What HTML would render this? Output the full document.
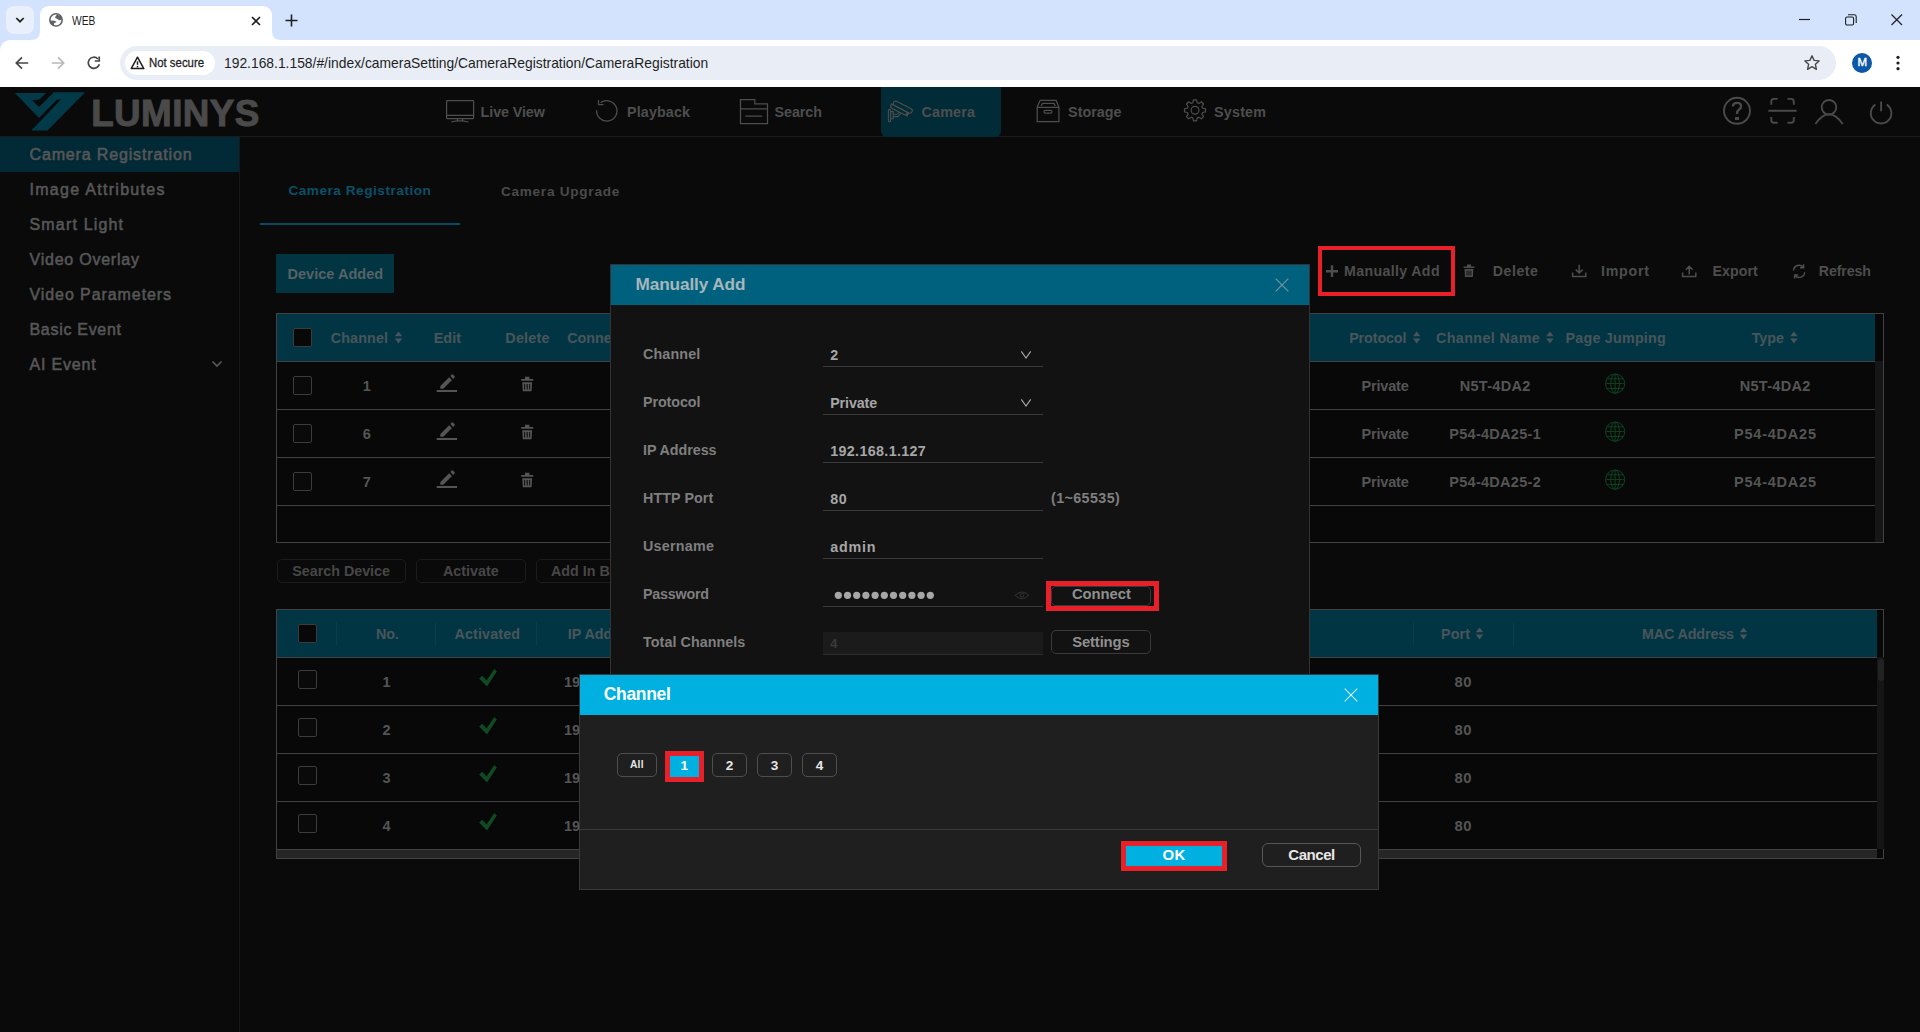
<!DOCTYPE html>
<html><head><meta charset="utf-8">
<style>
*{box-sizing:border-box;margin:0;padding:0}
html,body{width:1920px;height:1032px;overflow:hidden;background:#0a0a0a;font-family:"Liberation Sans",sans-serif}
.a{position:absolute}
.t{position:absolute;white-space:nowrap;line-height:1}
svg{position:absolute;overflow:visible}
</style></head><body>

<div class="a" style="left:0px;top:0px;width:1920px;height:40px;background:#d3e3fd"></div>
<div class="a" style="left:6px;top:6px;width:28px;height:28px;background:#e9effb;border-radius:8px"></div>
<svg style="left:0;top:0" width="40" height="40"><path d="M16.3 18 L20 21.7 L23.7 18" stroke="#1f1f1f" stroke-width="1.7" fill="none"/></svg>
<div class="a" style="left:40px;top:6px;width:232px;height:34px;background:#fff;border-radius:9px 9px 0 0"></div>
<svg style="left:31px;top:31px" width="9" height="9"><path d="M0 9 Q9 9 9 0 V9 Z" fill="#fff"/></svg>
<svg style="left:272px;top:31px" width="9" height="9"><path d="M0 0 Q0 9 9 9 H0 Z" fill="#fff"/></svg>
<svg style="left:44px;top:8px" width="24" height="24" viewBox="0 0 24 24"><circle cx="12" cy="11.9" r="6.15" fill="none" stroke="#5f6368" stroke-width="1.6"/><path d="M13 6.6 L16.6 8.2 L17.9 10.6 L17.5 11.8 L15.1 12.2 L13.5 10.9 L11.2 10.1 L11.4 8.4 Z M6.2 12.6 L10.9 12.7 L12.6 14.2 L10.2 15.1 L9.9 17.4 L7.6 16.3 L6 14 Z" fill="#5f6368"/></svg>
<div class="t" style="left:72.20px;top:15.00px;font-size:12.5px;color:#1f1f1f;transform:scaleX(0.82);transform-origin:0 0;">WEB</div>
<svg style="left:251px;top:16px" width="10" height="10"><path d="M1 1 L9 9 M9 1 L1 9" stroke="#1f1f1f" stroke-width="1.6"/></svg>
<svg style="left:285px;top:14px" width="13" height="13"><path d="M6.5 0.5 V12.5 M0.5 6.5 H12.5" stroke="#1f1f1f" stroke-width="1.6"/></svg>
<svg style="left:1799px;top:13px" width="12" height="12"><path d="M0 6.5 H11" stroke="#1f1f1f" stroke-width="1.2"/></svg>
<svg style="left:1845px;top:14px" width="12" height="12"><rect x="0.6" y="3" width="8" height="8" rx="1.5" stroke="#1f1f1f" stroke-width="1.1" fill="none"/><path d="M3 0.8 H9.3 Q11.2 0.8 11.2 2.7 V9" stroke="#1f1f1f" stroke-width="1.1" fill="none"/></svg>
<svg style="left:1891px;top:14px" width="12" height="12"><path d="M0.5 0.5 L11 11 M11 0.5 L0.5 11" stroke="#1f1f1f" stroke-width="1.2"/></svg>
<div class="a" style="left:0px;top:40px;width:12px;height:12px;background:#d3e3fd"></div>
<div class="a" style="left:0px;top:40px;width:1920px;height:47px;background:#fff;border-radius:10px 0 0 0"></div>
<svg style="left:14px;top:55px" width="16" height="16"><path d="M14.2 8 H2.5 M8 2.3 L2.3 8 L8 13.7" stroke="#474747" stroke-width="1.7" fill="none"/></svg>
<svg style="left:50px;top:55px" width="16" height="16"><path d="M1.8 8 H13.5 M8 2.3 L13.7 8 L8 13.7" stroke="#b9b9b9" stroke-width="1.7" fill="none"/></svg>
<svg style="left:86px;top:55px" width="16" height="16"><path d="M13.3 9.2 A5.6 5.6 0 1 1 11.8 3.8" stroke="#474747" stroke-width="1.7" fill="none"/><path d="M13.2 1.5 V6 H8.7" stroke="#474747" stroke-width="1.7" fill="none"/></svg>
<div class="a" style="left:120px;top:46px;width:1716px;height:34px;background:#e9eef6;border-radius:17px"></div>
<div class="a" style="left:125px;top:51px;width:90px;height:24px;background:#fff;border-radius:12px"></div>
<svg style="left:130px;top:56px" width="15" height="14"><path d="M7.5 1.2 L13.8 12.6 H1.2 Z" stroke="#1f1f1f" stroke-width="1.5" fill="none" stroke-linejoin="round"/><path d="M7.5 5.3 V8.8" stroke="#1f1f1f" stroke-width="1.5"/><circle cx="7.5" cy="10.7" r="0.85" fill="#1f1f1f"/></svg>
<div class="t" style="left:149.00px;top:57.10px;font-size:12.5px;color:#1f1f1f;-webkit-text-stroke:0.3px #1f1f1f;transform:scaleX(0.91);transform-origin:0 0;">Not secure</div>
<div class="t" style="left:224.00px;top:56.48px;font-size:14.5px;color:#1f1f1f;transform:scaleX(0.955);transform-origin:0 0;">192.168.1.158/#/index/cameraSetting/CameraRegistration/CameraRegistration</div>
<svg style="left:1803px;top:54px" width="18" height="18"><path d="M9 1.8 L11.1 6.4 L16.1 6.9 L12.4 10.3 L13.4 15.3 L9 12.7 L4.6 15.3 L5.6 10.3 L1.9 6.9 L6.9 6.4 Z" stroke="#474747" stroke-width="1.4" fill="none" stroke-linejoin="round"/></svg>
<div class="a" style="left:1852px;top:53px;width:20px;height:20px;border-radius:10px;background:#0b57a8"></div>
<div class="t" style="left:1857.51px;top:57.46px;font-size:11.5px;color:#fff;-webkit-text-stroke:0.4px #fff;">M</div>
<svg style="left:1895px;top:55px" width="6" height="16"><circle cx="3" cy="2.3" r="1.6" fill="#1f1f1f"/><circle cx="3" cy="8" r="1.6" fill="#1f1f1f"/><circle cx="3" cy="13.7" r="1.6" fill="#1f1f1f"/></svg>
<div class="a" style="left:0px;top:136px;width:1920px;height:1px;background:#1b1b1b"></div>
<svg style="left:0;top:0" width="100" height="140"><path d="M14.9 93.1 L46 93.1 L39.4 99.4 L32.2 100.2 L39 106.9 L53.9 92.2 L85.1 92.2 L47.5 130.6 L31.3 130.6 L61 99.4 L56.9 99.7 L39 118 Z" fill="#023a4a"/></svg>
<div class="t" style="left:91.20px;top:95.81px;font-size:36.8px;color:#4a4a4a;font-weight:bold;letter-spacing:0.43px;-webkit-text-stroke:1px #4a4a4a;">LUMINYS</div>
<div class="a" style="left:881px;top:87px;width:120px;height:50px;background:#022b38;border-radius:0 0 6px 6px"></div>
<svg style="left:0;top:0" width="1300" height="140" fill="none" stroke="#4e4e4e" stroke-width="1.25">
 <rect x="446.6" y="100.6" width="27" height="18" rx="0.8"/>
 <path d="M447 115.4 H473 M457.5 118.8 V120.8 M462.5 118.8 V120.8 M451 122 Q459.7 119.8 468.4 122"/>
 <path d="M596.6 110.3 A10.2 10.2 0 1 0 600.6 102.8"/>
 <path d="M598.5 100 V104.7 H603.5"/>
 <path d="M740.5 99.5 H754.8 V103.9 H767.5 V123.6 H740.5 Z M740.5 108.8 H767.5 M745.3 116.2 H762.2"/>
 <path d="M1037.2 107.3 H1058.9 V121.5 H1037.2 Z M1040 100.4 H1056.2 L1058.9 107.3 M1040 100.4 L1037.2 107.3 M1041.2 106 L1042.4 103.4 H1054 L1055.2 106"/>
 <rect x="1044" y="110.4" width="8" height="2.8" rx="1.4"/>
</svg>
<svg style="left:0;top:0" width="1300" height="140" fill="none" stroke="#4e4e4e" stroke-width="1.2" stroke-linejoin="round"><path d="M1192.82 102.71 L1193.43 99.82 L1196.57 99.82 L1197.18 102.71 L1198.83 103.39 L1201.31 101.78 L1203.52 103.99 L1201.91 106.47 L1202.59 108.12 L1205.48 108.73 L1205.48 111.87 L1202.59 112.48 L1201.91 114.13 L1203.52 116.61 L1201.31 118.82 L1198.83 117.21 L1197.18 117.89 L1196.57 120.78 L1193.43 120.78 L1192.82 117.89 L1191.17 117.21 L1188.69 118.82 L1186.48 116.61 L1188.09 114.13 L1187.41 112.48 L1184.52 111.87 L1184.52 108.73 L1187.41 108.12 L1188.09 106.47 L1186.48 103.99 L1188.69 101.78 L1191.17 103.39 Z"/><circle cx="1195" cy="110.3" r="3.9"/></svg>
<svg style="left:0;top:0" width="1000" height="140" fill="none" stroke="#4e4e4e" stroke-width="1.1">
 <rect x="888.4" y="109.4" width="2.2" height="12.2" rx="1"/>
 <path d="M890.6 111.6 H893.2 V118.8 H890.6 M893.2 114.3 H896.8 Q898.6 114 899 112 M893.2 116.6 H898 L900.8 113.4"/>
 <g transform="translate(895.2 100.6) rotate(27)">
  <rect x="-0.6" y="0" width="20.6" height="4.8" rx="2.2"/>
  <path d="M-1.8 4.8 H17.6 V8.4 H1 Q-1.8 8.4 -1.8 6.2 Z"/>
  <circle cx="16.4" cy="6.5" r="0.8"/>
 </g>
</svg>
<div class="t" style="left:480.60px;top:105.31px;font-size:14.3px;color:#4e4e4e;font-weight:bold;letter-spacing:-0.08px;">Live View</div>
<div class="t" style="left:627.00px;top:105.31px;font-size:14.3px;color:#4e4e4e;font-weight:bold;letter-spacing:0.14px;">Playback</div>
<div class="t" style="left:774.50px;top:105.31px;font-size:14.3px;color:#4e4e4e;font-weight:bold;letter-spacing:-0.04px;">Search</div>
<div class="t" style="left:921.50px;top:105.31px;font-size:14.3px;color:#4e4e4e;font-weight:bold;letter-spacing:0.21px;">Camera</div>
<div class="t" style="left:1068.10px;top:105.31px;font-size:14.3px;color:#4e4e4e;font-weight:bold;letter-spacing:0.03px;">Storage</div>
<div class="t" style="left:1214.00px;top:105.31px;font-size:14.3px;color:#4e4e4e;font-weight:bold;letter-spacing:0.23px;">System</div>
<svg style="left:0;top:0" width="1920" height="140" fill="none" stroke="#4a4a4a" stroke-width="1.9">
 <circle cx="1737" cy="110.8" r="13"/>
 <path d="M1732.9 106.6 Q1732.9 102.9 1737 102.9 Q1741.1 102.9 1741.1 106.3 Q1741.1 108.5 1738.8 109.8 Q1737 110.9 1737 114" stroke-width="2.4"/>
 <path d="M1771.3 104.8 V101.6 Q1771.3 98.9 1774 98.9 H1777.6 M1787.5 98.9 H1791 Q1793.8 98.9 1793.8 101.6 V104.8 M1793.8 117 V120 Q1793.8 122.8 1791 122.8 H1787.5 M1777.6 122.8 H1774 Q1771.3 122.8 1771.3 120 V117 M1768.4 110.8 H1796.6"/>
 <circle cx="1829" cy="107.3" r="7.3"/>
 <path d="M1815.4 124 Q1829 104.5 1842.7 124"/>
 <path d="M1875.4 104.6 A10.3 10.3 0 1 0 1886.8 104.6 M1881.1 101.4 V111.3"/>
</svg>
<div class="a" style="left:1735px;top:116.5px;width:3.6px;height:3.6px;background:#4a4a4a"></div>
<div class="a" style="left:239px;top:137px;width:1px;height:895px;background:#181818"></div>
<div class="a" style="left:0px;top:137px;width:239px;height:35px;background:#022a36"></div>
<div class="t" style="left:29.50px;top:147.14px;font-size:16px;color:#575757;letter-spacing:0.85px;-webkit-text-stroke:0.55px #575757;">Camera Registration</div>
<div class="t" style="left:29.50px;top:182.14px;font-size:16px;color:#575757;letter-spacing:1.29px;-webkit-text-stroke:0.55px #575757;">Image Attributes</div>
<div class="t" style="left:29.50px;top:217.14px;font-size:16px;color:#575757;letter-spacing:1.17px;-webkit-text-stroke:0.55px #575757;">Smart Light</div>
<div class="t" style="left:29.50px;top:252.14px;font-size:16px;color:#575757;letter-spacing:0.77px;-webkit-text-stroke:0.55px #575757;">Video Overlay</div>
<div class="t" style="left:29.50px;top:287.14px;font-size:16px;color:#575757;letter-spacing:0.92px;-webkit-text-stroke:0.55px #575757;">Video Parameters</div>
<div class="t" style="left:29.50px;top:322.14px;font-size:16px;color:#575757;letter-spacing:0.70px;-webkit-text-stroke:0.55px #575757;">Basic Event</div>
<div class="t" style="left:29.50px;top:357.14px;font-size:16px;color:#575757;letter-spacing:0.82px;-webkit-text-stroke:0.55px #575757;">AI Event</div>
<svg style="left:211px;top:360px" width="12" height="8"><path d="M1.5 1.5 L6 6 L10.5 1.5" stroke="#575757" stroke-width="1.7" fill="none"/></svg>
<div class="t" style="left:288.40px;top:183.92px;font-size:13.6px;color:#0a5068;font-weight:bold;letter-spacing:0.53px;">Camera Registration</div>
<div class="t" style="left:500.90px;top:184.82px;font-size:13.6px;color:#4a4a4a;font-weight:bold;letter-spacing:0.74px;">Camera Upgrade</div>
<div class="a" style="left:260px;top:223px;width:200px;height:2px;background:#044a60"></div>
<div class="a" style="left:276px;top:253.5px;width:117.5px;height:39px;background:#023542"></div>
<div class="t" style="left:287.50px;top:267.23px;font-size:14.5px;color:#566266;font-weight:bold;letter-spacing:0.02px;">Device Added</div>
<div class="t" style="left:1344.00px;top:263.73px;font-size:14.2px;color:#4e4e4e;font-weight:bold;letter-spacing:0.35px;">Manually Add</div>
<div class="t" style="left:1492.80px;top:263.73px;font-size:14.2px;color:#4e4e4e;font-weight:bold;letter-spacing:0.52px;">Delete</div>
<div class="t" style="left:1601.00px;top:263.73px;font-size:14.2px;color:#4e4e4e;font-weight:bold;letter-spacing:0.77px;">Import</div>
<div class="t" style="left:1712.50px;top:263.73px;font-size:14.2px;color:#4e4e4e;font-weight:bold;letter-spacing:0.07px;">Export</div>
<div class="t" style="left:1818.75px;top:263.73px;font-size:14.2px;color:#4e4e4e;font-weight:bold;letter-spacing:-0.10px;">Refresh</div>
<svg style="left:0;top:0" width="1920" height="300" fill="none" stroke="#4e4e4e" stroke-width="1.5">
 <path d="M1332 265.3 V277 M1326 271.2 H1338" stroke-width="2.4"/>
 <path d="M1463.6 266.4 H1474.3 V268 H1463.6 Z M1467 264.6 H1471 V266.4 H1467 Z M1464.6 268.9 H1473.3 L1472.9 277 H1465 Z" fill="#4e4e4e" stroke="none"/><path d="M1467.1 270.6 V275.6 M1469 270.6 V275.6 M1470.9 270.6 V275.6" stroke="#0a0a0a" stroke-width="0.9"/>
 <path d="M1579.2 264.8 V273 M1575.8 269.6 L1579.2 273 L1582.6 269.6 M1572.6 272.5 V276.6 H1585.8 V272.5"/>
 <path d="M1689.2 274.5 V266.3 M1685.8 269.7 L1689.2 266.3 L1692.6 269.7 M1682.6 272.5 V276.6 H1695.8 V272.5"/>
 <path d="M1793.5 270.5 A5.6 5.6 0 0 1 1803.3 267.2 M1804.7 272.2 A5.6 5.6 0 0 1 1794.9 275.5 M1803.6 264.2 V267.8 H1800 M1794.6 278.6 V275 H1798.2"/>
</svg>
<div class="a" style="left:1318px;top:246px;width:137px;height:50px;border:4.6px solid #e8202a"></div>
<div class="a" style="left:276px;top:313px;width:1608px;height:230px;border:1px solid #424242;background:#080808"></div>
<div class="a" style="left:277px;top:314px;width:1598px;height:47px;background:#023543"></div>
<div class="a" style="left:1875px;top:361px;width:8px;height:181px;background:#161616"></div>
<div class="a" style="left:277px;top:361px;width:1598px;height:1px;background:#424242"></div>
<div class="a" style="left:277px;top:409px;width:1598px;height:1px;background:#424242"></div>
<div class="a" style="left:277px;top:457px;width:1598px;height:1px;background:#424242"></div>
<div class="a" style="left:277px;top:505px;width:1598px;height:1px;background:#424242"></div>
<div class="a" style="left:293px;top:328px;width:19px;height:19px;border:1px solid #3c3c3c;border-radius:2px;background:#080808"></div>
<div class="a" style="left:293px;top:376px;width:19px;height:19px;border:1px solid #3c3c3c;border-radius:2px;background:#0a0a0a"></div>
<div class="a" style="left:293px;top:424px;width:19px;height:19px;border:1px solid #3c3c3c;border-radius:2px;background:#0a0a0a"></div>
<div class="a" style="left:293px;top:472px;width:19px;height:19px;border:1px solid #3c3c3c;border-radius:2px;background:#0a0a0a"></div>
<div class="t" style="left:330.80px;top:331.41px;font-size:14.3px;color:#48555a;font-weight:bold;letter-spacing:0.13px;">Channel</div>
<div class="t" style="left:433.70px;top:331.41px;font-size:14.3px;color:#48555a;font-weight:bold;letter-spacing:0.10px;">Edit</div>
<div class="t" style="left:505.30px;top:331.41px;font-size:14.3px;color:#48555a;font-weight:bold;letter-spacing:0.26px;">Delete</div>
<div class="t" style="left:567.20px;top:331.41px;font-size:14.3px;color:#48555a;font-weight:bold;">Connection</div>
<div class="t" style="left:1349.20px;top:331.41px;font-size:14.3px;color:#48555a;font-weight:bold;letter-spacing:-0.10px;">Protocol</div>
<div class="t" style="left:1436.00px;top:331.41px;font-size:14.3px;color:#48555a;font-weight:bold;letter-spacing:0.40px;">Channel Name</div>
<div class="t" style="left:1565.50px;top:331.41px;font-size:14.3px;color:#48555a;font-weight:bold;letter-spacing:0.23px;">Page Jumping</div>
<div class="t" style="left:1751.70px;top:331.41px;font-size:14.3px;color:#48555a;font-weight:bold;letter-spacing:-0.00px;">Type</div>
<svg style="left:0;top:0" width="1920" height="700" fill="#48555a"><path d="M394.8 336.3 L398.5 331.5 L402.2 336.3 Z M394.8 338.6 L398.5 343.4 L402.2 338.6 Z"/><path d="M1413 336.3 L1416.7 331.5 L1420.4 336.3 Z M1413 338.6 L1416.7 343.4 L1420.4 338.6 Z"/><path d="M1546.2 336.3 L1549.9 331.5 L1553.6000000000001 336.3 Z M1546.2 338.6 L1549.9 343.4 L1553.6000000000001 338.6 Z"/><path d="M1790.2 336.3 L1793.9 331.5 L1797.6000000000001 336.3 Z M1790.2 338.6 L1793.9 343.4 L1797.6000000000001 338.6 Z"/></svg>
<div class="t" style="left:362.77px;top:379.48px;font-size:14.5px;color:#555555;font-weight:bold;">1</div>
<div class="t" style="left:1361.55px;top:379.48px;font-size:14.5px;color:#555555;font-weight:bold;letter-spacing:-0.18px;">Private</div>
<div class="t" style="left:1459.75px;top:379.48px;font-size:14.5px;color:#555555;font-weight:bold;letter-spacing:0.29px;">N5T-4DA2</div>
<div class="t" style="left:1739.75px;top:379.48px;font-size:14.5px;color:#555555;font-weight:bold;letter-spacing:0.29px;">N5T-4DA2</div>
<div class="t" style="left:362.77px;top:427.48px;font-size:14.5px;color:#555555;font-weight:bold;">6</div>
<div class="t" style="left:1361.55px;top:427.48px;font-size:14.5px;color:#555555;font-weight:bold;letter-spacing:-0.18px;">Private</div>
<div class="t" style="left:1449.25px;top:427.48px;font-size:14.5px;color:#555555;font-weight:bold;letter-spacing:0.28px;">P54-4DA25-1</div>
<div class="t" style="left:1734.00px;top:427.48px;font-size:14.5px;color:#555555;font-weight:bold;letter-spacing:0.78px;">P54-4DA25</div>
<div class="t" style="left:362.77px;top:475.48px;font-size:14.5px;color:#555555;font-weight:bold;">7</div>
<div class="t" style="left:1361.55px;top:475.48px;font-size:14.5px;color:#555555;font-weight:bold;letter-spacing:-0.18px;">Private</div>
<div class="t" style="left:1449.25px;top:475.48px;font-size:14.5px;color:#555555;font-weight:bold;letter-spacing:0.28px;">P54-4DA25-2</div>
<div class="t" style="left:1734.00px;top:475.48px;font-size:14.5px;color:#555555;font-weight:bold;letter-spacing:0.78px;">P54-4DA25</div>
<svg style="left:0;top:0" width="1920" height="560"><path d="M436.7 389.9 H457 V391.9 H436.7 Z M440.2 388.7 L440.4 385.9 L449.1 377.2 L452 380.1 L443.3 388.8 Z M450.3 376 L451.7 374.6 Q452.3 374.1 452.9 374.6 L454.6 376.3 Q455.1 376.9 454.6 377.5 L453.2 378.9 Z" fill="#555555"/><path d="M521.2 379 H533.2 V380.8 H521.2 Z M525 376.7 H529.4 V379 H525 Z M522.3 382.2 H532.1 L531.6 391.2 H522.8 Z" fill="#555555"/><path d="M524.7 384 V389.5 M527.2 384 V389.5 M529.7 384 V389.5" stroke="#0a0a0a" stroke-width="1"/><g fill="none" stroke="#0c4423" stroke-width="1.0"><circle cx="1615.1" cy="383.6" r="9.6"/><ellipse cx="1615.1" cy="383.6" rx="4.3" ry="9.6"/><path d="M1605.5 383.6 H1624.7 M1606.8 378.8 H1623.4 M1606.8 388.40000000000003 H1623.4 M1615.1 374.0 V393.20000000000005"/></g><path d="M436.7 437.9 H457 V439.9 H436.7 Z M440.2 436.7 L440.4 433.9 L449.1 425.2 L452 428.1 L443.3 436.8 Z M450.3 424 L451.7 422.6 Q452.3 422.1 452.9 422.6 L454.6 424.3 Q455.1 424.9 454.6 425.5 L453.2 426.9 Z" fill="#555555"/><path d="M521.2 427 H533.2 V428.8 H521.2 Z M525 424.7 H529.4 V427 H525 Z M522.3 430.2 H532.1 L531.6 439.2 H522.8 Z" fill="#555555"/><path d="M524.7 432 V437.5 M527.2 432 V437.5 M529.7 432 V437.5" stroke="#0a0a0a" stroke-width="1"/><g fill="none" stroke="#0c4423" stroke-width="1.0"><circle cx="1615.1" cy="431.6" r="9.6"/><ellipse cx="1615.1" cy="431.6" rx="4.3" ry="9.6"/><path d="M1605.5 431.6 H1624.7 M1606.8 426.8 H1623.4 M1606.8 436.40000000000003 H1623.4 M1615.1 422.0 V441.20000000000005"/></g><path d="M436.7 485.9 H457 V487.9 H436.7 Z M440.2 484.7 L440.4 481.9 L449.1 473.2 L452 476.1 L443.3 484.8 Z M450.3 472 L451.7 470.6 Q452.3 470.1 452.9 470.6 L454.6 472.3 Q455.1 472.9 454.6 473.5 L453.2 474.9 Z" fill="#555555"/><path d="M521.2 475 H533.2 V476.8 H521.2 Z M525 472.7 H529.4 V475 H525 Z M522.3 478.2 H532.1 L531.6 487.2 H522.8 Z" fill="#555555"/><path d="M524.7 480 V485.5 M527.2 480 V485.5 M529.7 480 V485.5" stroke="#0a0a0a" stroke-width="1"/><g fill="none" stroke="#0c4423" stroke-width="1.0"><circle cx="1615.1" cy="479.6" r="9.6"/><ellipse cx="1615.1" cy="479.6" rx="4.3" ry="9.6"/><path d="M1605.5 479.6 H1624.7 M1606.8 474.8 H1623.4 M1606.8 484.40000000000003 H1623.4 M1615.1 470.0 V489.20000000000005"/></g></svg>
<div class="a" style="left:276.6px;top:559.2px;width:129px;height:23.4px;border:1px solid #1c1c1c;border-radius:5px"></div>
<div class="t" style="left:292.30px;top:563.51px;font-size:14.3px;color:#474747;font-weight:bold;letter-spacing:-0.01px;">Search Device</div>
<div class="a" style="left:416.1px;top:559.2px;width:110px;height:23.4px;border:1px solid #1c1c1c;border-radius:5px"></div>
<div class="t" style="left:443.00px;top:563.51px;font-size:14.3px;color:#474747;font-weight:bold;letter-spacing:0.02px;">Activate</div>
<div class="a" style="left:536.4px;top:559.2px;width:130px;height:23.4px;border:1px solid #1c1c1c;border-radius:5px"></div>
<div class="t" style="left:551.00px;top:563.51px;font-size:14.3px;color:#474747;font-weight:bold;">Add In Batch</div>
<div class="a" style="left:276px;top:609px;width:1608px;height:250px;border:1px solid #424242;background:#080808"></div>
<div class="a" style="left:277px;top:610px;width:1600px;height:47px;background:#023543"></div>
<div class="a" style="left:1877px;top:657px;width:7px;height:192px;background:#151515"></div>
<div class="a" style="left:1877.5px;top:659px;width:6px;height:22px;background:#222;border-radius:3px"></div>
<div class="a" style="left:277px;top:849px;width:1600px;height:9px;background:#262626"></div>
<div class="a" style="left:277px;top:657px;width:1600px;height:1px;background:#424242"></div>
<div class="a" style="left:277px;top:705px;width:1600px;height:1px;background:#424242"></div>
<div class="a" style="left:277px;top:753px;width:1600px;height:1px;background:#424242"></div>
<div class="a" style="left:277px;top:801px;width:1600px;height:1px;background:#424242"></div>
<div class="a" style="left:277px;top:849px;width:1600px;height:1px;background:#424242"></div>
<div class="a" style="left:335.9px;top:622px;width:1px;height:24px;background:#063e4c"></div>
<div class="a" style="left:435.3px;top:622px;width:1px;height:24px;background:#063e4c"></div>
<div class="a" style="left:536.4px;top:622px;width:1px;height:24px;background:#063e4c"></div>
<div class="a" style="left:1412.5px;top:622px;width:1px;height:24px;background:#063e4c"></div>
<div class="a" style="left:1512.5px;top:622px;width:1px;height:24px;background:#063e4c"></div>
<div class="a" style="left:298.2px;top:624.4px;width:19px;height:19px;border:1px solid #3c3c3c;border-radius:2px;background:#080808"></div>
<div class="a" style="left:298.2px;top:670.3px;width:19px;height:19px;border:1px solid #3c3c3c;border-radius:2px;background:#0a0a0a"></div>
<div class="a" style="left:298.2px;top:718.3px;width:19px;height:19px;border:1px solid #3c3c3c;border-radius:2px;background:#0a0a0a"></div>
<div class="a" style="left:298.2px;top:766.3px;width:19px;height:19px;border:1px solid #3c3c3c;border-radius:2px;background:#0a0a0a"></div>
<div class="a" style="left:298.2px;top:814.3px;width:19px;height:19px;border:1px solid #3c3c3c;border-radius:2px;background:#0a0a0a"></div>
<div class="t" style="left:376.00px;top:627.41px;font-size:14.3px;color:#48555a;font-weight:bold;letter-spacing:-0.17px;">No.</div>
<div class="t" style="left:454.50px;top:627.41px;font-size:14.3px;color:#48555a;font-weight:bold;letter-spacing:0.14px;">Activated</div>
<div class="t" style="left:567.80px;top:627.41px;font-size:14.3px;color:#48555a;font-weight:bold;">IP Address</div>
<div class="t" style="left:1441.00px;top:627.41px;font-size:14.3px;color:#48555a;font-weight:bold;letter-spacing:0.13px;">Port</div>
<div class="t" style="left:1642.00px;top:627.41px;font-size:14.3px;color:#48555a;font-weight:bold;letter-spacing:-0.12px;">MAC Address</div>
<svg style="left:0;top:0" width="1920" height="700" fill="#48555a"><path d="M1475.8 632.3 L1479.5 627.5 L1483.2 632.3 Z M1475.8 634.6 L1479.5 639.4 L1483.2 634.6 Z"/><path d="M1739.8 632.3 L1743.5 627.5 L1747.2 632.3 Z M1739.8 634.6 L1743.5 639.4 L1747.2 634.6 Z"/></svg>
<div class="t" style="left:382.57px;top:675.48px;font-size:14.5px;color:#555555;font-weight:bold;">1</div>
<div class="t" style="left:564.00px;top:675.48px;font-size:14.5px;color:#555555;font-weight:bold;">192.168.1.127</div>
<div class="t" style="left:1454.50px;top:675.43px;font-size:14.8px;color:#555555;font-weight:bold;letter-spacing:0.54px;">80</div>
<div class="t" style="left:382.57px;top:723.48px;font-size:14.5px;color:#555555;font-weight:bold;">2</div>
<div class="t" style="left:564.00px;top:723.48px;font-size:14.5px;color:#555555;font-weight:bold;">192.168.1.128</div>
<div class="t" style="left:1454.50px;top:723.43px;font-size:14.8px;color:#555555;font-weight:bold;letter-spacing:0.54px;">80</div>
<div class="t" style="left:382.57px;top:771.48px;font-size:14.5px;color:#555555;font-weight:bold;">3</div>
<div class="t" style="left:564.00px;top:771.48px;font-size:14.5px;color:#555555;font-weight:bold;">192.168.1.129</div>
<div class="t" style="left:1454.50px;top:771.43px;font-size:14.8px;color:#555555;font-weight:bold;letter-spacing:0.54px;">80</div>
<div class="t" style="left:382.57px;top:819.48px;font-size:14.5px;color:#555555;font-weight:bold;">4</div>
<div class="t" style="left:564.00px;top:819.48px;font-size:14.5px;color:#555555;font-weight:bold;">192.168.1.130</div>
<div class="t" style="left:1454.50px;top:819.43px;font-size:14.8px;color:#555555;font-weight:bold;letter-spacing:0.54px;">80</div>
<svg style="left:0;top:0" width="1920" height="900" fill="#0e4a22"><path d="M479.2 678.6 L482.3 675.8 L486.6 680.5 L494.2 669 L496.8 671.4 L487 686.5 Z"/><path d="M479.2 726.6 L482.3 723.8 L486.6 728.5 L494.2 717 L496.8 719.4 L487 734.5 Z"/><path d="M479.2 774.6 L482.3 771.8 L486.6 776.5 L494.2 765 L496.8 767.4 L487 782.5 Z"/><path d="M479.2 822.6 L482.3 819.8 L486.6 824.5 L494.2 813 L496.8 815.4 L487 830.5 Z"/></svg>
<div class="a" style="left:610px;top:264px;width:700px;height:445px;background:#121212;border:1px solid #333333"></div>
<div class="a" style="left:611px;top:265px;width:698px;height:40.3px;background:#00617f"></div>
<div class="t" style="left:635.50px;top:275.95px;font-size:17.2px;color:#a7b6ba;font-weight:bold;letter-spacing:-0.11px;">Manually Add</div>
<svg style="left:1275px;top:278px" width="14" height="14"><path d="M0.7 0.7 L13.3 13.3 M13.3 0.7 L0.7 13.3" stroke="#7896a0" stroke-width="1.1"/></svg>
<div class="t" style="left:643.00px;top:347.41px;font-size:14.3px;color:#7f7f7f;font-weight:bold;letter-spacing:0.13px;">Channel</div>
<div class="t" style="left:643.00px;top:395.41px;font-size:14.3px;color:#7f7f7f;font-weight:bold;letter-spacing:-0.07px;">Protocol</div>
<div class="t" style="left:643.00px;top:443.41px;font-size:14.3px;color:#7f7f7f;font-weight:bold;letter-spacing:-0.04px;">IP Address</div>
<div class="t" style="left:643.00px;top:491.41px;font-size:14.3px;color:#7f7f7f;font-weight:bold;letter-spacing:0.08px;">HTTP Port</div>
<div class="t" style="left:643.00px;top:539.41px;font-size:14.3px;color:#7f7f7f;font-weight:bold;letter-spacing:0.26px;">Username</div>
<div class="t" style="left:643.00px;top:587.41px;font-size:14.3px;color:#7f7f7f;font-weight:bold;letter-spacing:-0.22px;">Password</div>
<div class="t" style="left:643.00px;top:635.41px;font-size:14.3px;color:#7f7f7f;font-weight:bold;letter-spacing:0.07px;">Total Channels</div>
<div class="t" style="left:830.20px;top:347.91px;font-size:14.3px;color:#a6a6a6;font-weight:bold;">2</div>
<div class="t" style="left:830.20px;top:395.91px;font-size:14.3px;color:#a6a6a6;font-weight:bold;letter-spacing:-0.12px;">Private</div>
<div class="t" style="left:830.20px;top:443.91px;font-size:14.3px;color:#a6a6a6;font-weight:bold;letter-spacing:0.35px;">192.168.1.127</div>
<div class="t" style="left:830.20px;top:491.91px;font-size:14.3px;color:#a6a6a6;font-weight:bold;letter-spacing:0.59px;">80</div>
<div class="t" style="left:830.20px;top:539.91px;font-size:14.3px;color:#a6a6a6;font-weight:bold;letter-spacing:0.77px;">admin</div>
<div class="t" style="left:1051.00px;top:491.31px;font-size:14.3px;color:#7f7f7f;font-weight:bold;letter-spacing:0.40px;">(1~65535)</div>
<div class="a" style="left:823px;top:366px;width:219.5px;height:1px;background:#393939"></div>
<div class="a" style="left:823px;top:414px;width:219.5px;height:1px;background:#393939"></div>
<div class="a" style="left:823px;top:462px;width:219.5px;height:1px;background:#393939"></div>
<div class="a" style="left:823px;top:510px;width:219.5px;height:1px;background:#393939"></div>
<div class="a" style="left:823px;top:558px;width:219.5px;height:1px;background:#393939"></div>
<div class="a" style="left:823px;top:606px;width:219.5px;height:1px;background:#393939"></div>
<svg style="left:0;top:0" width="1920" height="700" fill="none" stroke="#a6a6a6" stroke-width="1.2">
 <path d="M1021.3 351.4 L1026 358 L1030.7 351.4"/>
 <path d="M1021.3 399.4 L1026 406 L1030.7 399.4"/>
 <path d="M1015.3 595.3 Q1022 588.8 1028.8 595.3 Q1022 601.8 1015.3 595.3 Z" stroke="#2c2c2c" stroke-width="1.1"/>
 <circle cx="1022" cy="595.3" r="1.8" stroke="#2c2c2c" stroke-width="1.1"/>
</svg>
<svg style="left:0;top:0" width="1000" height="700" fill="#a6a6a6"><circle cx="838.3" cy="595.3" r="3.6"/><circle cx="847.5" cy="595.3" r="3.6"/><circle cx="856.7" cy="595.3" r="3.6"/><circle cx="865.9" cy="595.3" r="3.6"/><circle cx="875.1" cy="595.3" r="3.6"/><circle cx="884.3" cy="595.3" r="3.6"/><circle cx="893.5" cy="595.3" r="3.6"/><circle cx="902.7" cy="595.3" r="3.6"/><circle cx="911.9" cy="595.3" r="3.6"/><circle cx="921.1" cy="595.3" r="3.6"/><circle cx="930.3" cy="595.3" r="3.6"/></svg>
<div class="a" style="left:823px;top:632px;width:219.5px;height:23px;background:#1b1b1b;border-bottom:1px solid #2c2c2c"></div>
<div class="t" style="left:830.00px;top:637.04px;font-size:13.5px;color:#393939;font-weight:bold;">4</div>
<div class="a" style="left:1051.3px;top:586px;width:99.3px;height:19.6px;border:1px solid #393939;border-radius:5px"></div>
<div class="t" style="left:1071.90px;top:587.18px;font-size:14.8px;color:#8f8f8f;font-weight:bold;letter-spacing:-0.03px;">Connect</div>
<div class="a" style="left:1046px;top:581px;width:113px;height:30px;border:5px solid #e8202a"></div>
<div class="a" style="left:1051.3px;top:630.4px;width:99.3px;height:24px;border:1px solid #393939;border-radius:5px"></div>
<div class="t" style="left:1072.30px;top:634.63px;font-size:14.8px;color:#8f8f8f;font-weight:bold;letter-spacing:-0.15px;">Settings</div>
<div class="a" style="left:579.4px;top:674.4px;width:800px;height:216px;background:#1f1f1f;border:1px solid #3a3a3a"></div>
<div class="a" style="left:580.4px;top:675.4px;width:798px;height:40px;background:#00b0e0"></div>
<div class="t" style="left:603.80px;top:686.40px;font-size:17.5px;color:#ffffff;font-weight:bold;letter-spacing:-0.34px;">Channel</div>
<svg style="left:1344px;top:688px" width="14" height="14"><path d="M0.7 0.7 L13.3 13.3 M13.3 0.7 L0.7 13.3" stroke="#d6f1fa" stroke-width="1.1"/></svg>
<div class="a" style="left:580.4px;top:828.6px;width:798px;height:1px;background:#3a3a3a"></div>
<div class="a" style="left:617.1px;top:753.1px;width:39.8px;height:24.4px;border:1px solid #4e4e4e;border-radius:5px"></div>
<div class="a" style="left:712.1px;top:753.1px;width:34.8px;height:24.4px;border:1px solid #4e4e4e;border-radius:5px"></div>
<div class="a" style="left:757.1px;top:753.1px;width:34.8px;height:24.4px;border:1px solid #4e4e4e;border-radius:5px"></div>
<div class="a" style="left:802.1px;top:753.1px;width:34.8px;height:24.4px;border:1px solid #4e4e4e;border-radius:5px"></div>
<div class="a" style="left:665px;top:751px;width:39px;height:31px;border:5px solid #e8202a;background:#00b0e0"></div>
<div class="t" style="left:630.00px;top:759.75px;font-size:10.3px;color:#e6e6e6;font-weight:bold;letter-spacing:0.17px;">All</div>
<div class="t" style="left:680.52px;top:759.22px;font-size:13.6px;color:#ffffff;font-weight:bold;">1</div>
<div class="t" style="left:725.72px;top:759.22px;font-size:13.6px;color:#e6e6e6;font-weight:bold;">2</div>
<div class="t" style="left:770.72px;top:759.22px;font-size:13.6px;color:#e6e6e6;font-weight:bold;">3</div>
<div class="t" style="left:815.72px;top:759.22px;font-size:13.6px;color:#e6e6e6;font-weight:bold;">4</div>
<div class="a" style="left:1121px;top:841px;width:105.7px;height:29.8px;border:5.2px solid #e8202a;background:#00b0e0"></div>
<div class="t" style="left:1162.40px;top:847.20px;font-size:15px;color:#ffffff;font-weight:bold;letter-spacing:0.50px;">OK</div>
<div class="a" style="left:1261.9px;top:843px;width:99.5px;height:23.6px;border:1px solid #575757;border-radius:6px"></div>
<div class="t" style="left:1288.30px;top:847.20px;font-size:15px;color:#e6e6e6;font-weight:bold;letter-spacing:-0.44px;">Cancel</div>
</body></html>
